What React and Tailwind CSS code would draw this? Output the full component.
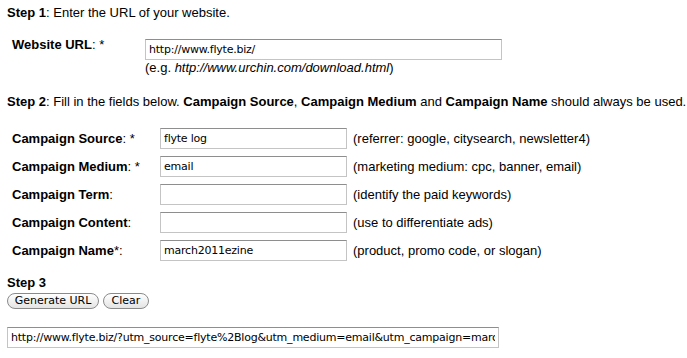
import React, { useState } from 'react';

const fields = [
  { label: 'Campaign Source', star: ': *', value: 'flyte log', hint: '(referrer: google, citysearch, newsletter4)' },
  { label: 'Campaign Medium', star: ': *', value: 'email', hint: '(marketing medium: cpc, banner, email)' },
  { label: 'Campaign Term', star: ':', value: '', hint: '(identify the paid keywords)' },
  { label: 'Campaign Content', star: ':', value: '', hint: '(use to differentiate ads)' },
  { label: 'Campaign Name', star: '*:', value: 'march2011ezine', hint: '(product, promo code, or slogan)' },
];

const inputCls =
  'h-[21px] bg-white border border-[#c4c4c4] border-t-[#8e8e8e] px-[3px] text-[11px] leading-[15px] tracking-[-0.22px] text-black outline-none font-["DejaVu_Sans",sans-serif]';

const Btn = ({ children, className }) => (
  <button
    className={`h-[16px] whitespace-nowrap rounded-full border border-[#8a8a8a] bg-gradient-to-b from-white to-[#e4e4e4] px-[2px] text-[11px] leading-[14px] text-black font-["DejaVu_Sans",sans-serif] ${className || ''}`}
  >
    {children}
  </button>
);

const App = () => {
  const [site, setSite] = useState('http://www.flyte.biz/');
  const [vals, setVals] = useState(fields.map((f) => f.value));

  return (
    <div className='w-[687px] h-[358px] overflow-hidden bg-white text-black text-[13px] leading-[16px] font-["Liberation_Sans",Arial,sans-serif] pl-[7px] pt-[5px]'>
      <div>
        <b>Step 1</b>: Enter the URL of your website.
      </div>

      <div className="flex mt-[16px]">
        <div className="w-[138px] pl-[5px] shrink-0">
          <b>Website URL</b>: *
        </div>
        <div className="flex flex-col pt-[2px]">
          <input
            className={`${inputCls} w-[357px]`}
            value={site}
            onChange={(e) => setSite(e.target.value)}
          />
          <div>
            (e.g. <i>http://www.urchin.com/download.html</i>)
          </div>
        </div>
      </div>

      <div className="mt-[18px] whitespace-nowrap">
        <b>Step 2</b>: Fill in the fields below. <b>Campaign Source</b>, <b>Campaign Medium</b> and{' '}
        <b>Campaign Name</b> should always be used.
      </div>

      <div className="flex flex-col gap-[7px] mt-[18px]">
        {fields.map((f, i) => (
          <div key={f.label} className="flex items-center h-[21px]">
            <div className="w-[153px] pl-[5px] shrink-0">
              <b>{f.label}</b>
              {f.star}
            </div>
            <input
              className={`${inputCls} w-[187px]`}
              value={vals[i]}
              onChange={(e) => setVals(vals.map((v, j) => (j === i ? e.target.value : v)))}
            />
            <div className="pl-[6px] whitespace-nowrap">{f.hint}</div>
          </div>
        ))}
      </div>

      <div className="mt-[14px] font-bold">Step 3</div>
      <div className="flex gap-[4px] mt-[2px]">
        <Btn className="w-[92px]">Generate URL</Btn>
        <Btn className="w-[46px]">Clear</Btn>
      </div>

      <input
        readOnly
        className={`${inputCls} w-[492px] mt-[18px] block`}
        value="http://www.flyte.biz/?utm_source=flyte%2Blog&utm_medium=email&utm_campaign=march2011ezine"
      />
    </div>
  );
};

export default App;
